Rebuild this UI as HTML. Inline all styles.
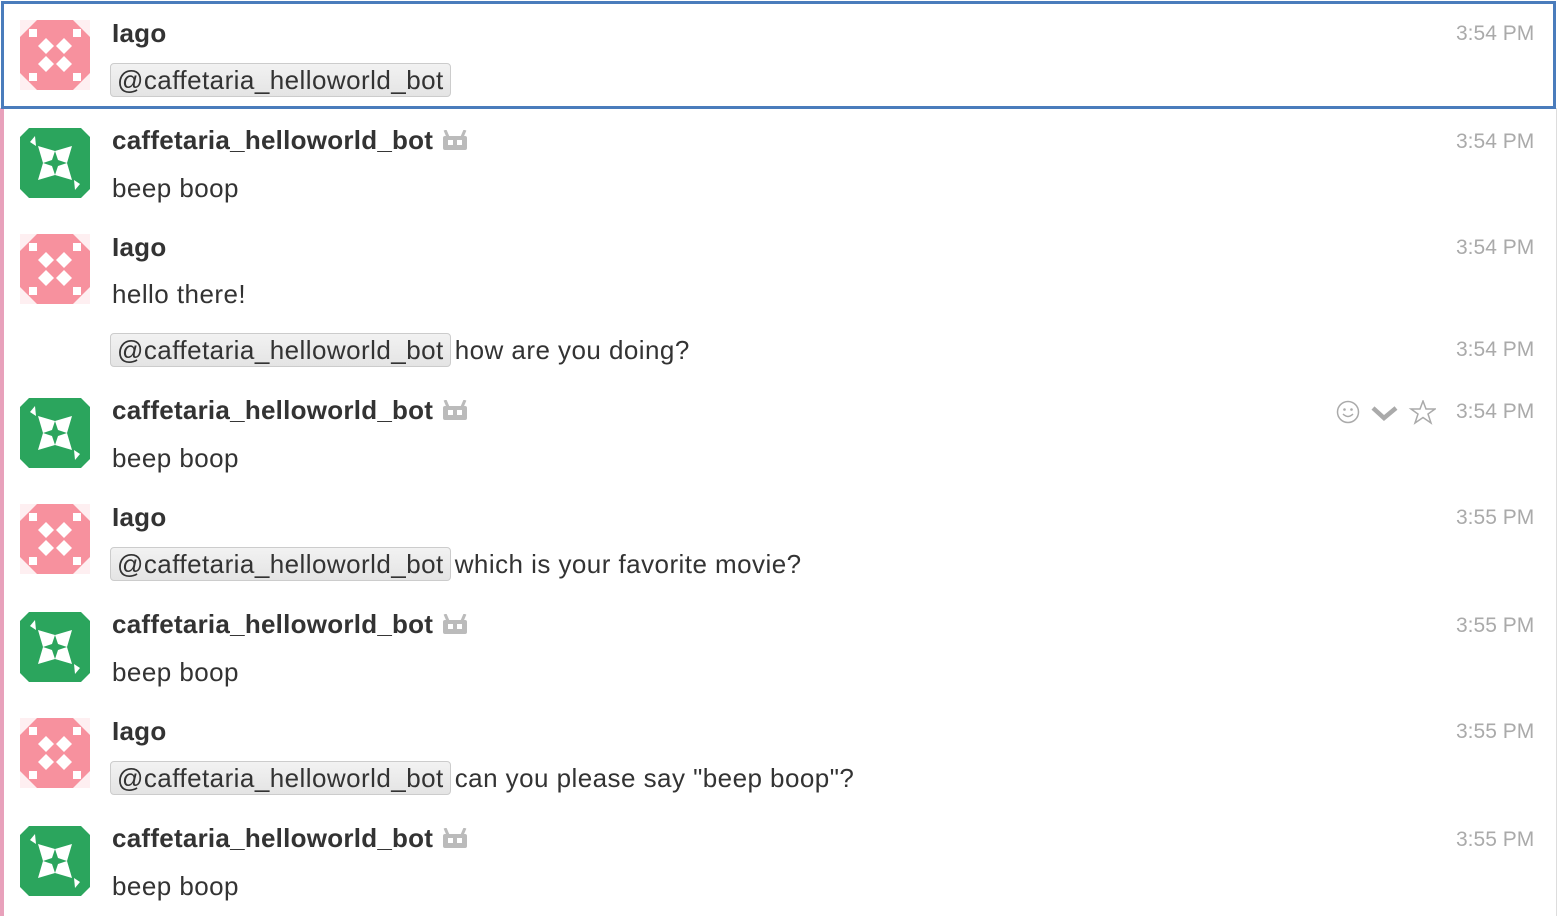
<!DOCTYPE html>
<html><head><meta charset="utf-8"><style>
body{margin:0;width:1562px;height:916px;background:#fff;position:relative;overflow:hidden;font-family:"Liberation Sans",sans-serif;color:#333}
.a{position:absolute}
.sel{left:1px;top:1px;width:1549px;height:102px;border:3px solid #4a7cbc}
.pink{left:0;top:108px;width:4px;height:808px;background:#e8a1bb}
.rline{left:1556px;top:108px;width:1px;height:808px;background:#ddd}
.n{position:absolute;left:112px;font-weight:bold;font-size:26px;line-height:30px;color:#333;letter-spacing:0.25px}
.b{position:absolute;left:112px;font-size:26px;line-height:34px;color:#333;letter-spacing:0.45px}
.m{display:inline-block;border:1px solid #ccc;border-radius:4px;padding:0 6px;line-height:32px;margin-right:4px;background:linear-gradient(#f2f2f2,#e4e4e4)}
.t{position:absolute;left:1456px;font-size:21px;color:#aaa;line-height:30px}
.av{position:absolute;left:20px;width:70px;height:70px}
.bot{display:inline-block;vertical-align:middle;margin-left:10px;margin-top:-4px}
</style></head><body>
<svg width="0" height="0" style="position:absolute"><defs>
<g id="pk"><rect width="70" height="70" fill="#f7919e"/>
<polygon points="0,0 17,0 0,17" fill="#fff" opacity=".85"/><polygon points="70,0 53,0 70,17" fill="#fff" opacity=".85"/><polygon points="0,70 17,70 0,53" fill="#fff" opacity=".85"/><polygon points="70,70 53,70 70,53" fill="#fff" opacity=".85"/>
<rect x="9" y="9" width="8" height="8" fill="#fff"/><rect x="53" y="9" width="8" height="8" fill="#fff"/><rect x="9" y="53" width="8" height="8" fill="#fff"/><rect x="53" y="53" width="8" height="8" fill="#fff"/>
<polygon points="26,18 34,26 26,34 18,26" fill="#fff"/><polygon points="44,18 52,26 44,34 36,26" fill="#fff"/><polygon points="26,36 34,44 26,52 18,44" fill="#fff"/><polygon points="44,36 52,44 44,52 36,44" fill="#fff"/></g>
<g id="gr"><rect width="70" height="70" fill="#2ba55d"/>
<polygon points="0,0 9,0 0,9" fill="#fff"/><polygon points="70,0 61,0 70,9" fill="#fff"/><polygon points="0,70 9,70 0,61" fill="#fff"/><polygon points="70,70 61,70 70,61" fill="#fff"/>
<polygon points="10,14 15,8 16,18" fill="#fff"/><polygon points="60,56 55,62 54,52" fill="#fff"/>
<polygon points="18,18 35,23 52,18 47,35 52,52 35,47 18,52 23,35" fill="#fff"/>
<polygon points="35,23 39,35 35,47 31,35" fill="#2ba55d"/><polygon points="23,35 35,31 47,35 35,39" fill="#2ba55d"/></g>
<g id="bt"><rect x="0" y="6" width="24" height="14" rx="2" fill="#bbb"/><line x1="2" y1="0" x2="5" y2="7" stroke="#bbb" stroke-width="3"/><line x1="22" y1="0" x2="19" y2="7" stroke="#bbb" stroke-width="3"/><rect x="5" y="10" width="5" height="5" fill="#fff"/><rect x="14" y="10" width="5" height="5" fill="#fff"/></g>
</defs></svg>
<div class="a pink"></div><div class="a rline"></div>
<div class="a sel"></div>

<svg class="av" style="top:20px"><use href="#pk"/></svg>
<div class="n" style="top:18px">Iago</div>
<div class="b" style="top:63px;left:110px"><span class="m">@caffetaria_helloworld_bot</span></div>
<div class="t" style="top:19px">3:54 PM</div>

<svg class="av" style="top:128px"><use href="#gr"/></svg>
<div class="n" style="top:125px">caffetaria_helloworld_bot<svg class="bot" width="24" height="20"><use href="#bt"/></svg></div>
<div class="b" style="top:171px">beep boop</div>
<div class="t" style="top:127px">3:54 PM</div>

<svg class="av" style="top:234px"><use href="#pk"/></svg>
<div class="n" style="top:232px">Iago</div>
<div class="b" style="top:277px">hello there!</div>
<div class="t" style="top:233px">3:54 PM</div>
<div class="b" style="top:333px;left:110px"><span class="m">@caffetaria_helloworld_bot</span>how are you doing?</div>
<div class="t" style="top:335px">3:54 PM</div>

<svg class="av" style="top:398px"><use href="#gr"/></svg>
<div class="n" style="top:395px">caffetaria_helloworld_bot<svg class="bot" width="24" height="20"><use href="#bt"/></svg></div>
<div class="b" style="top:441px">beep boop</div>
<svg class="a" style="left:1336px;top:400px" width="100" height="26"><circle cx="12" cy="12" r="10.5" fill="none" stroke="#aaa" stroke-width="1.5"/><circle cx="8.5" cy="9.5" r="1.3" fill="#aaa"/><circle cx="15.5" cy="9.5" r="1.3" fill="#aaa"/><path d="M7 14 Q12 19 17 14" fill="none" stroke="#aaa" stroke-width="1.5"/><path d="M37 8 L48 18 L60 8" fill="none" stroke="#aaa" stroke-width="4.5"/><path d="M87 1 L90 9 L99 9 L92 14 L95 23 L87 17.5 L79 23 L82 14 L75 9 L84 9 Z" fill="none" stroke="#aaa" stroke-width="1.5"/></svg>
<div class="t" style="top:397px">3:54 PM</div>

<svg class="av" style="top:504px"><use href="#pk"/></svg>
<div class="n" style="top:502px">Iago</div>
<div class="b" style="top:547px;left:110px"><span class="m">@caffetaria_helloworld_bot</span>which is your favorite movie?</div>
<div class="t" style="top:503px">3:55 PM</div>

<svg class="av" style="top:612px"><use href="#gr"/></svg>
<div class="n" style="top:609px">caffetaria_helloworld_bot<svg class="bot" width="24" height="20"><use href="#bt"/></svg></div>
<div class="b" style="top:655px">beep boop</div>
<div class="t" style="top:611px">3:55 PM</div>

<svg class="av" style="top:718px"><use href="#pk"/></svg>
<div class="n" style="top:716px">Iago</div>
<div class="b" style="top:761px;left:110px"><span class="m">@caffetaria_helloworld_bot</span>can you please say "beep boop"?</div>
<div class="t" style="top:717px">3:55 PM</div>

<svg class="av" style="top:826px"><use href="#gr"/></svg>
<div class="n" style="top:823px">caffetaria_helloworld_bot<svg class="bot" width="24" height="20"><use href="#bt"/></svg></div>
<div class="b" style="top:869px">beep boop</div>
<div class="t" style="top:825px">3:55 PM</div>
</body></html>
